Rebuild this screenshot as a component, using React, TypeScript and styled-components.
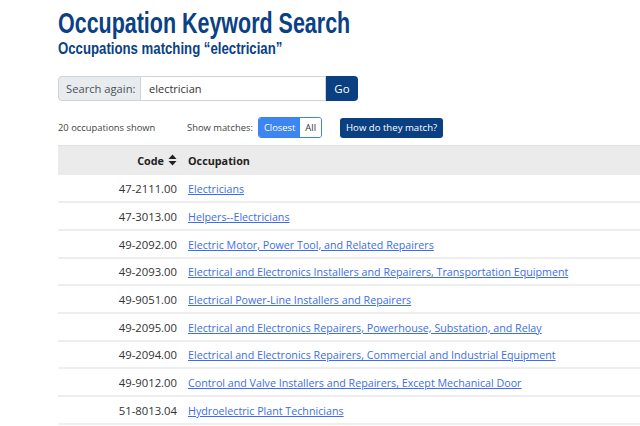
import React from 'react';
import styled, { createGlobalStyle } from 'styled-components';

const GlobalStyle = createGlobalStyle`
html, body {
    margin: 0;
    padding: 0;
    background: #ffffff;
    overflow: hidden;
}
body {
    font-family: "Open Sans", "Noto Sans", sans-serif;
    color: #333333;
}
`;

const Page = styled.div`
width: 640px;
padding: 8px 0 0 58px;
box-sizing: border-box;
`;

const Heading = styled.div`
display: flex;
flex-direction: column;
align-items: flex-start;
`;

// the site uses a condensed face; squeeze the bold sans to the same width
const Title = styled.h1`
display: inline-block;
margin: 0;
font-family: "Liberation Sans", Arial, sans-serif;
font-weight: 700;
font-size: 29px;
line-height: 31px;
color: #0a4185;
white-space: nowrap;
transform: scaleX(0.74);
transform-origin: left center;
`;

const SubTitle = styled.h2`
display: inline-block;
margin: 0;
font-family: "Liberation Sans", Arial, sans-serif;
font-weight: 700;
font-size: 17px;
line-height: 20px;
color: #0a4185;
white-space: nowrap;
transform: scaleX(0.776);
transform-origin: left center;
`;

const SearchGroup = styled.form`
display: flex;
margin-top: 17px;
width: 300px;
height: 25px;
`;

const SearchLabel = styled.label`
display: flex;
align-items: center;
width: 83px;
box-sizing: border-box;
padding: 0 0 0 7px;
font-size: 11.2px;
color: #495057;
background: #e9ecef;
border: 1px solid #ced4da;
border-radius: 4px 0 0 4px;
white-space: nowrap;
`;

const SearchInput = styled.div`
flex: 1;
display: flex;
align-items: center;
padding: 0 8px;
font-size: 11px;
color: #333333;
border: 1px solid #ced4da;
border-left: none;
`;

const GoButton = styled.button`
width: 32px;
border: none;
border-radius: 0 4px 4px 0;
background: #0a3f82;
color: #ffffff;
font-family: "Open Sans", sans-serif;
font-size: 11.5px;
padding: 0;
`;

const Toolbar = styled.div`
display: flex;
align-items: center;
margin-top: 16px;
height: 21px;
font-size: 9.4px;
color: #444444;
`;

const Count = styled.span`
width: 129px;
`;

const ToggleLabel = styled.span`
margin-right: 5px;
`;

const ToggleGroup = styled.div`
display: flex;
height: 19px;
border: 1px solid #3b82f0;
border-radius: 3px;
overflow: hidden;
margin-right: 18px;
`;

const ToggleButton = styled.span<{ active?: boolean }>`
display: flex;
align-items: center;
padding: 0 5px;
font-size: 9.4px;
color: ${({ active }) => active ? '#ffffff' : '#333333'};
background: ${({ active }) => active ? '#3d85f2' : '#ffffff'};
`;

const HelpButton = styled.span`
display: flex;
align-items: center;
height: 20px;
padding: 0 6px;
border-radius: 3px;
background: #0a3f82;
color: #ffffff;
font-size: 9.6px;
`;

const Table = styled.table`
margin-top: 7px;
width: 600px;
border-collapse: collapse;
`;

const HeadRow = styled.tr`
background: #ebebeb;
border-top: 1px solid #e2e2e2;
height: 29px;
`;

const HeadCell = styled.th<{ align?: string }>`
text-align: ${({ align }) => align || 'left'};
font-weight: 700;
font-size: 10.8px;
color: #222222;
padding: 0 0 0 11px;
`;

const CodeHead = styled.span`
display: inline-flex;
align-items: center;
gap: 4px;
`;

const Row = styled.tr`
height: 27.7px;
border-bottom: 2px solid #eeeeee;
`;

const CodeCell = styled.td`
width: 119px;
text-align: right;
font-size: 11.3px;
line-height: 16px;
color: #333333;
padding: 2px 0 0 0;
`;

const NameCell = styled.td`
font-size: 10.7px;
line-height: 16px;
padding: 2px 0 0 11px;
`;

const Link = styled.a`
color: #3d6ee8;
text-decoration: underline;
white-space: nowrap;
`;

const SortIcon = () => (
    <svg width="9" height="12" viewBox="0 0 9 12">
        <path d="M4.5 0.5 L8.5 5 L0.5 5 Z" fill="#222" />
        <path d="M4.5 11.5 L8.5 7 L0.5 7 Z" fill="#222" />
    </svg>
);

const rows = [
    ['47-2111.00', 'Electricians'],
    ['47-3013.00', 'Helpers--Electricians'],
    ['49-2092.00', 'Electric Motor, Power Tool, and Related Repairers'],
    ['49-2093.00', 'Electrical and Electronics Installers and Repairers, Transportation Equipment'],
    ['49-9051.00', 'Electrical Power-Line Installers and Repairers'],
    ['49-2095.00', 'Electrical and Electronics Repairers, Powerhouse, Substation, and Relay'],
    ['49-2094.00', 'Electrical and Electronics Repairers, Commercial and Industrial Equipment'],
    ['49-9012.00', 'Control and Valve Installers and Repairers, Except Mechanical Door'],
    ['51-8013.04', 'Hydroelectric Plant Technicians'],
];

const App: React.FC = () => {
    return (
        <Page>
            <GlobalStyle />
            <Heading>
                <Title>Occupation Keyword Search</Title>
                <SubTitle>Occupations matching “electrician”</SubTitle>
            </Heading>

            <SearchGroup>
                <SearchLabel>Search again:</SearchLabel>
                <SearchInput>electrician</SearchInput>
                <GoButton type="button">Go</GoButton>
            </SearchGroup>

            <Toolbar>
                <Count>20 occupations shown</Count>
                <ToggleLabel>Show matches:</ToggleLabel>
                <ToggleGroup>
                    <ToggleButton active>Closest</ToggleButton>
                    <ToggleButton>All</ToggleButton>
                </ToggleGroup>
                <HelpButton>How do they match?</HelpButton>
            </Toolbar>

            <Table>
                <thead>
                    <HeadRow>
                        <HeadCell align="right">
                            <CodeHead>Code <SortIcon /></CodeHead>
                        </HeadCell>
                        <HeadCell>Occupation</HeadCell>
                    </HeadRow>
                </thead>
                <tbody>
                    {rows.map(([code, name]) => (
                        <Row key={code}>
                            <CodeCell>{code}</CodeCell>
                            <NameCell><Link href="#">{name}</Link></NameCell>
                        </Row>
                    ))}
                </tbody>
            </Table>
        </Page>
    );
};

export default App;
